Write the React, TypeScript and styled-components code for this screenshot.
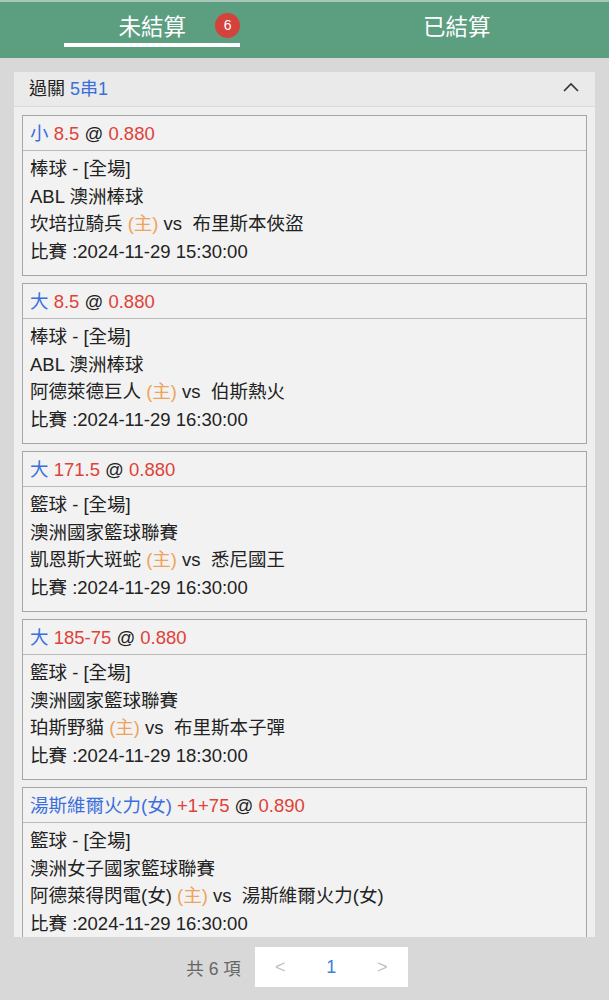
import React from "react";
import styled, { createGlobalStyle } from "styled-components";

const GlobalStyle = createGlobalStyle`
  body {
    margin: 0;
    background: #d8d8d8;
    font-family: "Liberation Sans", "Noto Sans CJK TC", sans-serif;
    color: #222;
  }
`;

const Page = styled.div`
  width: 609px;
  height: 1000px;
  overflow: hidden;
  background: #d8d8d8;
`;

const Header = styled.div`
  display: flex;
  height: 56px;
  border-top: 2px solid #a9c6b8;
  background: #5b9e80;
`;

const Tab = styled.div`
  flex: 1;
  display: flex;
  justify-content: center;
  align-items: flex-start;
`;

const TabLabel = styled.div<{ active?: boolean }>`
  position: relative;
  width: 176px;
  height: 45px;
  box-sizing: border-box;
  padding-top: 13px;
  text-align: center;
  font-size: 22.5px;
  line-height: 26px;
  color: #fff;
  border-bottom: 4px solid ${({ active }) => (active ? "#fff" : "transparent")};
`;

const Badge = styled.span`
  position: absolute;
  top: 11px;
  right: 0;
  width: 25px;
  height: 25px;
  border-radius: 50%;
  background: #d5413b;
  color: #fff;
  font-size: 14px;
  line-height: 25px;
  text-align: center;
`;

const Content = styled.div`
  padding: 14px 14px 0;
`;

const Panel = styled.div`
  height: 865px;
  overflow: hidden;
  background: #efefef;
`;

const PanelHead = styled.div`
  display: flex;
  align-items: center;
  justify-content: space-between;
  height: 35px;
  padding: 0 16px 4px 15px;
  box-sizing: border-box;
  background: #eaeaea;
  border-bottom: 1px solid #dadada;
  font-size: 18px;
`;

const Blue = styled.span`
  color: #3b6fdb;
`;

const Red = styled.span`
  color: #df4239;
`;

const Orange = styled.span`
  color: #eea35a;
`;

const CardList = styled.div`
  display: flex;
  flex-direction: column;
  gap: 7px;
  padding: 8px 8px 0;
`;

const Card = styled.div`
  border: 1px solid #a6a6a6;
  background: #f2f2f2;
  font-size: 18.5px;
`;

const CardTitle = styled.div`
  height: 34px;
  line-height: 35px;
  padding: 0 7px;
  border-bottom: 1px solid #b8b8b8;
`;

const CardBody = styled.div`
  padding: 4px 7px 10px;
  line-height: 27.5px;
`;

const Pager = styled.div`
  display: flex;
  justify-content: center;
  align-items: center;
  gap: 14px;
  padding: 10px 15px 0 0;
`;

const Total = styled.span`
  color: #666;
  font-size: 17.5px;
`;

const PageBox = styled.div`
  display: flex;
  width: 153px;
  height: 40px;
  background: #fff;
`;

const PageCell = styled.div<{ current?: boolean }>`
  flex: 1;
  display: flex;
  align-items: center;
  justify-content: center;
  font-size: 18px;
  color: ${({ current }) => (current ? "#3b7ee0" : "#c2c2c2")};
`;

type Bet = {
  pick: string;
  line: string;
  odds: string;
  sport: string;
  league: string;
  home: string;
  away: string;
  time: string;
};

const bets: Bet[] = [
  { pick: "小", line: "8.5", odds: "0.880", sport: "棒球", league: "ABL 澳洲棒球", home: "坎培拉騎兵", away: "布里斯本俠盜", time: "2024-11-29 15:30:00" },
  { pick: "大", line: "8.5", odds: "0.880", sport: "棒球", league: "ABL 澳洲棒球", home: "阿德萊德巨人", away: "伯斯熱火", time: "2024-11-29 16:30:00" },
  { pick: "大", line: "171.5", odds: "0.880", sport: "籃球", league: "澳洲國家籃球聯賽", home: "凱恩斯大斑蛇", away: "悉尼國王", time: "2024-11-29 16:30:00" },
  { pick: "大", line: "185-75", odds: "0.880", sport: "籃球", league: "澳洲國家籃球聯賽", home: "珀斯野貓", away: "布里斯本子彈", time: "2024-11-29 18:30:00" },
  { pick: "湯斯維爾火力(女)", line: "+1+75", odds: "0.890", sport: "籃球", league: "澳洲女子國家籃球聯賽", home: "阿德萊得閃電(女)", away: "湯斯維爾火力(女)", time: "2024-11-29 16:30:00" },
];

function ChevronUp() {
  return (
    <svg width="16" height="10" viewBox="0 0 16 10">
      <polyline points="1,9 8,2 15,9" fill="none" stroke="#333" strokeWidth="1.6" />
    </svg>
  );
}

function BetCard({ bet }: { bet: Bet }) {
  return (
    <Card>
      <CardTitle>
        <Blue>{bet.pick}</Blue> <Red>{bet.line}</Red> @ <Red>{bet.odds}</Red>
      </CardTitle>
      <CardBody>
        <div>{bet.sport} - [全場]</div>
        <div>{bet.league}</div>
        <div>
          {bet.home} <Orange>(主)</Orange> vs&nbsp; {bet.away}
        </div>
        <div>比賽 :{bet.time}</div>
      </CardBody>
    </Card>
  );
}

export default function App() {
  return (
    <Page>
      <GlobalStyle />
      <Header>
        <Tab>
          <TabLabel active>
            未結算
            <Badge>6</Badge>
          </TabLabel>
        </Tab>
        <Tab>
          <TabLabel>已結算</TabLabel>
        </Tab>
      </Header>
      <Content>
        <Panel>
          <PanelHead>
            <span>
              過關 <Blue>5串1</Blue>
            </span>
            <ChevronUp />
          </PanelHead>
          <CardList>
            {bets.map((bet, i) => (
              <BetCard key={i} bet={bet} />
            ))}
          </CardList>
        </Panel>
      </Content>
      <Pager>
        <Total>共 6 項</Total>
        <PageBox>
          <PageCell>&lt;</PageCell>
          <PageCell current>1</PageCell>
          <PageCell>&gt;</PageCell>
        </PageBox>
      </Pager>
    </Page>
  );
}
